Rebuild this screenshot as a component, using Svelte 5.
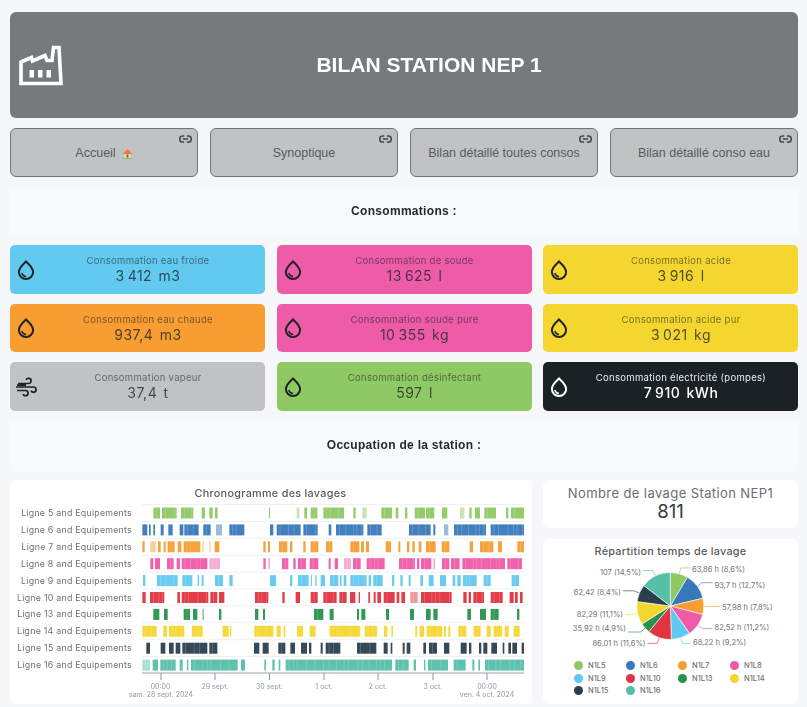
<script lang="ts">
  // chart segments are read off two crops of the timeline, hence the two x scales
  const rows = [
    { name: 'Ligne 5', color: '#8fc963', a: '460-480 486-530 543-580 605-615 628-638 645-653 807-810', b: '80-88l 103-111 122-142 160-222 250-257 277-290l 334-366 377-385 405-412 434-465 468-493 516-532 570-583l 598-605 615-630 643-678 708-715 723-762' },
    { name: 'Ligne 6', color: '#3878bc', a: '427-442 447-452 460-465 482-491 505-518 539-550 553-596 610-632 648-666l 688-733', b: '0-10 20-92 100-143 176-184 198-280 292-335 417-482 490-496 522-535l 552-648 662-762' },
    { name: 'Ligne 7', color: '#f79d31', a: '427-434 451-467l 474-482 491-497 503-524 533-544 551-601 607-611l 628-632l 644-658 790-797 804-810', b: '27-52 60-67 100-107 122-145 168-187 241-268 273-282 288-297 347-363 385-391 411-418 427-434 446-454 468-497 515-538 599-609 630-670 684-696 742-762' },
    { name: 'Ligne 8', color: '#ef5ba8', a: '451-460 465-480 501-521 530-540 545-622 628-660l 790-797 805-810l', b: '36-55 70-77 84-108 119-145 176-182 194-204 222-243l 249-272 290-344 387-435 441-448 453-484 490-495l 516-538 543-569 577-705 712-756' },
    { name: 'Ligne 9', color: '#60c9f0', a: '429-436 471-533 547-577 593-597 605-611 645-669 688-698', b: '0-18 60-67 84-116 123-126 136-140 152-165 180-205 210-215 221-229 241-290 296-303 310-338 366-373 391-398 416-422 451-459 476-491 510-528 548-556 562-572 579-620 641-662 725-747' },
    { name: 'Ligne 10', color: '#e03440', a: '427-437 450-493 532-540 545-625 631-652 657-673 765-805', b: '37-44 77-90 122-143 160-200 208-230 240-256 266-270 295-300 311-317 322-333 341-374 380-388 394-405 421-443l 453-545 580-590 596-603 610-642 662-698 719-731 735-743 750-758' },
    { name: 'Ligne 13', color: '#28914c', a: '460-478 492-503 551-570 579-592 607-612l 657-664 765-775 789-795', b: '132-160 179-191 261-267 274-286 348-357 420-432 468-482 490-503 592-603 630-648 662-686 741-748' },
    { name: 'Ligne 14', color: '#f5d62f', a: '427-470 490-501 507-553 576-608 668-686 690-694 763-810', b: '0-10 20-32 41-46 81-99 119-137 179-271 284-321 342-352 364-369 436-441 449-462 470-517 522-528 535-541 565-589 611-632 650-662 671-696 704-716 731-749' },
    { name: 'Ligne 15', color: '#2b3f4f', a: '439-450 482-496 507-521 527-541 547-622 628-652 762-778 788-806', b: '25-46 61-75 93-111 117-124 152-158 167-211 261-319 341-353 362-367 398-404 410-421 460-468 477-501 522-538 572-590 597-604 627-634 640-652 664-681 698-703 715-723 727-741 755-762' },
    { name: 'Ligne 16', color: '#55bfa9', a: '427-450l 458-474 481-527 539-548 561-565 573-713 723-735 793-798', b: '7-14 26-31 47-366 376-416 431-438 462-466 474-534 551-587 607-613 625-630 645-762' }
  ];

  function parse(list: string, offset: number) {
    return list.split(' ').map((s) => {
      const light = s.endsWith('l');
      const [from, to] = s.replace('l', '').split('-').map(Number);
      return { x: offset + from / 3, w: (to - from) / 3, light };
    });
  }

  // thin white gaps inside the long runs, so they read as many short washes
  function gaps(seg: { x: number; w: number }, seed: number) {
    const out: number[] = [];
    let p = seg.x + 3;
    let n = seed;
    while (p < seg.x + seg.w - 1.5) {
      out.push(p);
      n = (n * 7 + 13) % 23;
      p += 3.5 + (n % 7);
    }
    return out;
  }

  const chart = rows.map((r, i) => ({
    ...r,
    y: 512 + i * 16.9,
    segs: [...parse(r.a, 0), ...parse(r.b, 270)]
  }));

  const ticks = [161, 215, 269.5, 324, 378, 433, 487];
  const tickLabels = [
    { x: 160.5, t: '00:00' },
    { x: 215, t: '29 sept.' },
    { x: 269.5, t: '30 sept.' },
    { x: 324, t: '1 oct.' },
    { x: 378, t: '2 oct.' },
    { x: 433, t: '3 oct.' },
    { x: 487, t: '00:00' }
  ];

  const consos = [
    { label: 'Consommation eau froide', value: '3\u202f412 m3', cls: 'sky', icon: 'drop' },
    { label: 'Consommation de soude', value: '13\u202f625 l', cls: 'pink', icon: 'drop' },
    { label: 'Consommation acide', value: '3\u202f916 l', cls: 'yellow', icon: 'drop' },
    { label: 'Consommation eau chaude', value: '937,4 m3', cls: 'orange', icon: 'drop' },
    { label: 'Consommation soude pure', value: '10\u202f355 kg', cls: 'pink', icon: 'drop' },
    { label: 'Consommation acide pur', value: '3\u202f021 kg', cls: 'yellow', icon: 'drop' },
    { label: 'Consommation vapeur', value: '37,4 t', cls: 'grey', icon: 'wind' },
    { label: 'Consommation désinfectant', value: '597 l', cls: 'green', icon: 'drop' },
    { label: 'Consommation électricité (pompes)', value: '7\u202f910 kWh', cls: 'dark', icon: 'drop' }
  ];

  const links = ['Accueil', 'Synoptique', 'Bilan détaillé toutes consos', 'Bilan détaillé conso eau'];

  const pieData = [
    { name: 'N1L5', pct: 8.6, color: '#8fc963', label: '63,86 h (8,6%)', lx: 692, ly: 571, end: false },
    { name: 'N1L6', pct: 12.7, color: '#3878bc', label: '93,7 h (12,7%)', lx: 714.5, ly: 586.5, end: false },
    { name: 'N1L7', pct: 7.8, color: '#f79d31', label: '57,98 h (7,8%)', lx: 722, ly: 609, end: false },
    { name: 'N1L8', pct: 11.2, color: '#ef5ba8', label: '82,52 h (11,2%)', lx: 714.5, ly: 629, end: false },
    { name: 'N1L9', pct: 9.2, color: '#60c9f0', label: '68,22 h (9,2%)', lx: 693, ly: 644, end: false },
    { name: 'N1L10', pct: 11.6, color: '#e03440', label: '86,01 h (11,6%)', lx: 645.5, ly: 645, end: true },
    { name: 'N1L13', pct: 4.9, color: '#28914c', label: '35,92 h (4,9%)', lx: 626, ly: 630, end: true },
    { name: 'N1L14', pct: 11.1, color: '#f5d62f', label: '82,29 (11,1%)', lx: 623, ly: 615.5, end: true },
    { name: 'N1L15', pct: 8.4, color: '#2b3f4f', label: '62,42 (8,4%)', lx: 621, ly: 593.5, end: true },
    { name: 'N1L16', pct: 14.5, color: '#55bfa9', label: '107 (14,5%)', lx: 641, ly: 574, end: true }
  ];

  const cx = 670.3;
  const cy = 605;
  const r = 33.5;

  function pt(turn: number, radius: number) {
    const a = turn * 2 * Math.PI;
    return [cx + radius * Math.sin(a), cy - radius * Math.cos(a)];
  }

  let acc = 0;
  const slices = pieData.map((d) => {
    const start = acc / 100;
    acc += d.pct;
    const stop = acc / 100;
    const [x0, y0] = pt(start, r);
    const [x1, y1] = pt(stop, r);
    const mid = (start + stop) / 2;
    const [ax, ay] = pt(mid, r);
    const [bx, by] = pt(mid, r + 6);
    const ex = d.end ? d.lx + 2 : d.lx - 2;
    return {
      ...d,
      path: `M${cx} ${cy}L${x0} ${y0}A${r} ${r} 0 0 1 ${x1} ${y1}Z`,
      leader: `M${ax} ${ay}L${bx} ${by}L${ex} ${by}`
    };
  });
</script>

<div class="page">
  <header class="banner">
    <svg class="factory" viewBox="0 0 60 60" aria-hidden="true">
      <path d="M11 26 21.5 21.5l1 3.5L35 19.5l2 5h5L43.5 11.5h5.500L51 47.500H11Z" fill="none" stroke="#fff" stroke-width="3.6" />
      <path d="M19.5 34H24v7.500h-4.500zM28 34h4.500v7.500H28zM36.500 34H41v7.500h-4.500z" fill="#fff" />
    </svg>
    <h1>BILAN STATION NEP 1</h1>
  </header>

  <nav class="links">
    {#each links as link, i}
      <button type="button">
        <svg class="chain" viewBox="0 0 14 9" aria-hidden="true">
          <path d="M5.5 1H4a3.500 3.500 0 0 0 0 7h1.500M8.500 1H10a3.500 3.500 0 0 1 0 7H8.500M4 4.500h6" fill="none" stroke="currentColor" stroke-width="1.7" />
        </svg>
        <span>{link}</span>
        {#if i === 0}
          <svg class="house" viewBox="0 0 12 12" aria-hidden="true">
            <path d="M1 10.500h10V12H1z" fill="#8fc963" />
            <path d="M2.500 6h7v4.500h-7z" fill="#f3d9a8" />
            <path d="M5 7h2v3.500H5z" fill="#8a5a35" />
            <path d="M6 1 .5 6.500h11z" fill="#ef7b3c" />
          </svg>
        {/if}
      </button>
    {/each}
  </nav>

  <h2 class="band first">Consommations :</h2>

  <section class="consos">
    {#each consos as c}
      <div class="conso {c.cls}">
        <svg class="ico" viewBox="0 0 24 24" aria-hidden="true">
          {#if c.icon === 'drop'}
            <path d="M12 3.500C9.500 6 4.900 9.500 4.900 14a7.100 7.100 0 0 0 14.200 0C19.100 9.500 14.500 6 12 3.500Z" fill="none" stroke="currentColor" stroke-width="2" />
            <path d="M7.800 15c.5 2 2 3.300 4.200 3.600" fill="none" stroke="currentColor" stroke-width="1.500" />
          {:else}
            <path d="M4 8.500h10.500a2.600 2.600 0 1 0-2.400-3.600M2 12h17.500a2.600 2.600 0 1 1-2.400 3.600M3 15.500h8.500a2.600 2.600 0 1 1-2.400 3.600M3 10.200h9" fill="none" stroke="currentColor" stroke-width="1.700" />
          {/if}
        </svg>
        <div class="conso-text">
          <div class="conso-label">{c.label}</div>
          <div class="conso-value">{c.value}</div>
        </div>
      </div>
    {/each}
  </section>

  <h2 class="band second">Occupation de la station :</h2>

  <section class="bottom">
    <div class="panel timeline">
      <svg viewBox="10 479 522 224" width="522" height="224">
        <text class="chart-title" x="270.5" y="495.5" text-anchor="middle">Chronogramme des lavages</text>
        {#each chart as row, i}
          <line x1="142" x2="524" y1={row.y - 8.5} y2={row.y - 8.5} stroke="#eef0f2" />
          <text class="row-label" x="132" y={row.y + 3} text-anchor="end">{row.name} and Equipements</text>
          {#each row.segs as s, j}
            <rect x={s.x} y={row.y - 5.5} width={s.w} height="11" fill={row.color} opacity={s.light ? 0.5 : 0.95} />
            {#if s.w > 6}
              {#each gaps(s, i + j) as g}
                <rect x={g} y={row.y - 5.5} width="0.7" height="11" fill="#fff" opacity="0.25" />
              {/each}
            {/if}
          {/each}
        {/each}
        <line x1="142" x2="524" y1="672" y2="672" stroke="#9aa1a8" stroke-width="1.2" />
        {#each ticks as t}
          <line x1={t} x2={t} y1="672" y2="679" stroke="#8f979e" />
        {/each}
        {#each tickLabels as l}
          <text class="tick" x={l.x} y="688" text-anchor="middle">{l.t}</text>
        {/each}
        <text class="tick" x="161" y="695.5" text-anchor="middle">sam. 28 sept. 2024</text>
        <text class="tick" x="487" y="695.5" text-anchor="middle">ven. 4 oct. 2024</text>
      </svg>
    </div>

    <div class="side">
      <div class="panel count">
        <div class="count-label">Nombre de lavage Station NEP1</div>
        <div class="count-value">811</div>
      </div>
      <div class="panel pie">
        <svg viewBox="543 538 255 121" width="255" height="121">
          <text class="chart-title" x="670.5" y="554" text-anchor="middle">Répartition temps de lavage</text>
          {#each slices as s}
            <path d={s.leader} fill="none" stroke={s.color} stroke-width="0.9" opacity="0.7" />
          {/each}
          {#each slices as s}
            <path d={s.path} fill={s.color} stroke="#fff" stroke-width="0.6" />
          {/each}
          {#each slices as s}
            <text class="pie-label" x={s.lx} y={s.ly} text-anchor={s.end ? 'end' : 'start'}>{s.label}</text>
          {/each}
        </svg>
        <ul class="legend">
          {#each pieData as d}
            <li><i style="background:{d.color}"></i>{d.name}</li>
          {/each}
        </ul>
      </div>
    </div>
  </section>
</div>

<style>
  :global(body) { background: #f6f7f9; }
  .page {
    width: 788px;
    height: 707px;
    box-sizing: border-box;
    margin-left: 10px;
    padding-top: 12px;
    overflow: hidden;
    font-family: "Liberation Sans", Arial, sans-serif;
    /* the source capture is a soft, upscaled screenshot */
    filter: blur(0.35px);
  }
  .banner {
    height: 106px;
    display: flex;
    align-items: center;
    background: #767a7c;
    border-radius: 6px;
  }
  .factory { width: 60px; height: 60px; flex-shrink: 0; margin-top: 2px; }
  h1 {
    flex: 1;
    margin: 0;
    padding-right: 10px;
    text-align: center;
    color: #fff;
    font-size: 21px;
    font-weight: 700;
  }
  .links {
    display: grid;
    grid-template-columns: repeat(4, 188px);
    justify-content: space-between;
    margin-top: 10px;
  }
  button {
    position: relative;
    height: 49px;
    padding: 0;
    display: flex;
    align-items: center;
    justify-content: center;
    gap: 6px;
    box-sizing: border-box;
    background: #bfc3c4;
    border: 1.5px solid #707476;
    border-radius: 6px;
    color: #575b5e;
    font-family: inherit;
    font-size: 12.5px;
  }
  .chain { position: absolute; top: 6px; right: 5px; width: 13px; height: 8px; color: #46494b; }
  .house { width: 11px; height: 11px; margin-top: 1px; }
  .band {
    height: 48px;
    margin: 0;
    padding-bottom: 2px;
    box-sizing: border-box;
    display: flex;
    align-items: center;
    justify-content: center;
    background: #f8f9fb;
    color: #26292b;
    font-size: 12px;
    font-weight: 700;
    letter-spacing: 0.3px;
  }
  .band.first { margin-top: 11px; }
  .band.second { height: 50px; margin-top: 10px; }
  .consos {
    display: grid;
    grid-template-columns: repeat(3, 255px);
    grid-auto-rows: 48.5px;
    justify-content: space-between;
    row-gap: 10px;
    margin-top: 9px;
  }
  .conso {
    display: flex;
    align-items: center;
    padding: 0 7px 0 4px;
    border-radius: 5px;
    color: #1d2428;
    font-family: Inter, "Noto Sans", sans-serif;
  }
  .ico { width: 24px; height: 24px; flex-shrink: 0; margin-top: 1px; }
  .conso-text { flex: 1; padding-top: 1px; text-align: center; }
  .conso-label { font-size: 9.5px; line-height: 12px; letter-spacing: 0.3px; opacity: 0.6; }
  .conso-value { font-size: 14px; line-height: 17px; letter-spacing: 0.5px; word-spacing: 2px; opacity: 0.78; }
  .sky { background: #62caf0; }
  .pink { background: #ee5ca8; }
  .yellow { background: #f5d62f; }
  .orange { background: #f79d31; }
  .grey { background: #bfc3c4; }
  .green { background: #8fc963; }
  .dark { background: #1b2226; color: #fff; }
  .dark .conso-label { opacity: 0.92; }
  .dark .conso-value { opacity: 1; font-weight: 500; }
  .bottom {
    display: grid;
    grid-template-columns: 522px 255px;
    justify-content: space-between;
    margin-top: 9px;
  }
  .panel { background: #fff; border-radius: 6px; }
  .timeline { height: 224px; }
  svg { display: block; }
  .side { display: flex; flex-direction: column; gap: 11px; }
  .count { height: 48px; text-align: center; color: #6a6e71; font-family: Inter, "Noto Sans", sans-serif; }
  .count-label { padding-top: 5px; font-size: 13px; line-height: 17px; letter-spacing: 0.4px; }
  .count-value { margin-top: -2px; font-size: 18.5px; line-height: 22px; color: #35393c; }
  .pie { height: 165px; }
  .chart-title { font: 500 10.8px Inter, "Noto Sans", sans-serif; letter-spacing: 0.3px; fill: #55595c; }
  .row-label { font: 8.8px Inter, "Noto Sans", sans-serif; letter-spacing: 0.25px; fill: #6e7275; }
  .tick { font: 7px Inter, "Noto Sans", sans-serif; fill: #8d9ba6; }
  .pie-label { font: 7.5px Inter, "Noto Sans", sans-serif; fill: #6e7275; }
  .legend {
    list-style: none;
    margin: 0;
    padding: 0 0 0 31px;
    display: grid;
    grid-template-columns: repeat(4, 52px);
    grid-auto-rows: 12.6px;
    font: 500 7.5px Inter, "Noto Sans", sans-serif;
    color: #6e7275;
  }
  .legend li { display: flex; align-items: center; gap: 5px; }
  .legend i { width: 9px; height: 9px; border-radius: 50%; flex-shrink: 0; }
</style>
